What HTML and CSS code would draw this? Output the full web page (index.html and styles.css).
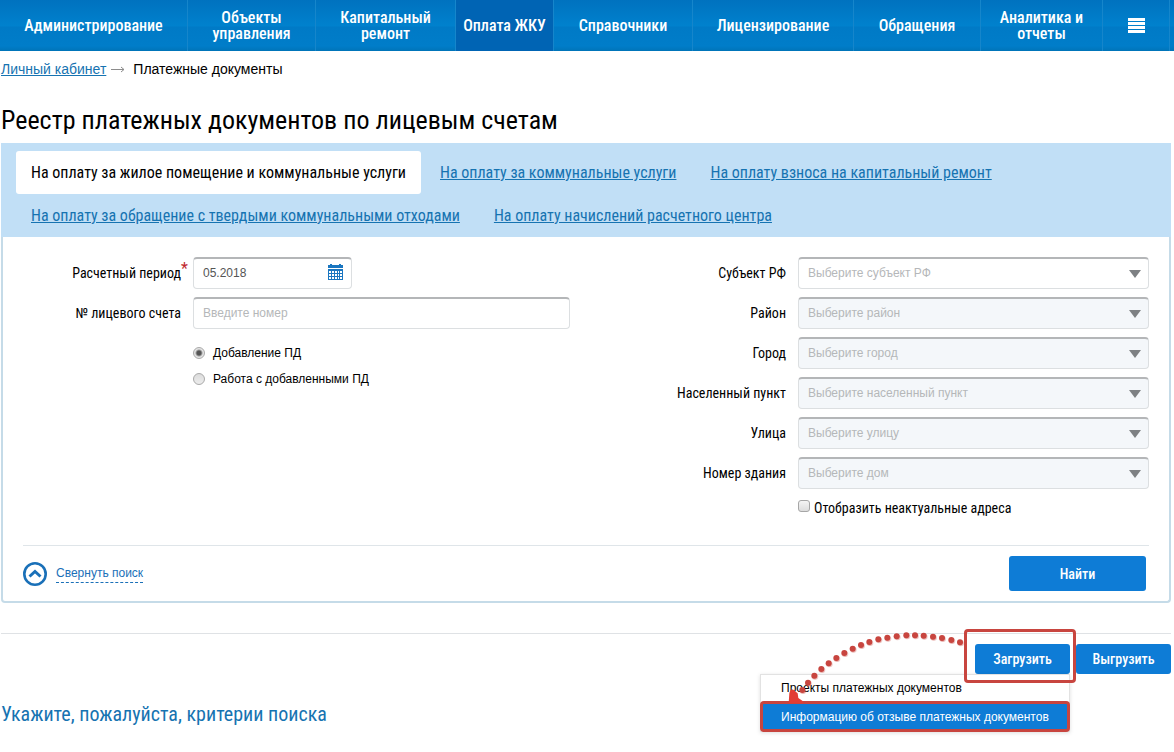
FILE: index.html
```html
<!DOCTYPE html>
<html lang="ru">
<head>
<meta charset="utf-8">
<title>Реестр платежных документов</title>
<link rel="stylesheet" href="styles.css">
</head>
<body>
<nav class="nav">
  <a class="nav-item" href="#">Администрирование</a>
  <a class="nav-item" href="#">Объекты управления</a>
  <a class="nav-item" href="#">Капитальный ремонт</a>
  <a class="nav-item active" href="#">Оплата ЖКУ</a>
  <a class="nav-item" href="#">Справочники</a>
  <a class="nav-item" href="#">Лицензирование</a>
  <a class="nav-item" href="#">Обращения</a>
  <a class="nav-item" href="#">Аналитика и отчеты</a>
  <button class="nav-item nav-menu" type="button" aria-label="Меню">
    <svg width="17" height="16" viewBox="0 0 17 16" fill="#fff"><path d="M0 0h17v3H0zM0 4h17v3H0zM0 8h17v3H0zM0 12h17v3H0z"/></svg>
  </button>
</nav>
<main class="page">
  <div class="crumbs">
    <a class="link" href="#">Личный кабинет</a>
    <svg width="14" height="8" viewBox="0 0 14 8" fill="none" stroke="#8c8c8c"><path d="M0 4.5h13M10 2l3 2.5L10 7"/></svg>
    <span class="crumb-current">Платежные документы</span>
  </div>
  <h1 class="title">Реестр платежных документов по лицевым счетам</h1>

  <form class="panel">
    <div class="tabs">
      <a class="tab current" href="#">На оплату за жилое помещение и коммунальные услуги</a>
      <a class="tab" href="#">На оплату за коммунальные услуги</a>
      <a class="tab" href="#">На оплату взноса на капитальный ремонт</a>
      <a class="tab" href="#">На оплату за обращение с твердыми коммунальными отходами</a>
      <a class="tab" href="#">На оплату начислений расчетного центра</a>
    </div>
    <div class="panel-body">
      <div class="columns">
        <div class="column left">
          <div class="row">
            <label class="label" for="period">Расчетный период<span class="required">*</span></label>
            <div class="date">
              <input class="field" id="period" type="text" value="05.2018">
              <svg class="calendar" width="15" height="16" viewBox="0 0 15 16"><path fill="#1a76c0" d="M0 1h2V0h2v1h7V0h2v1h2v3H0zM0 5h15v11H0z"/><path fill="#fff" d="M1 7h2v2H1zM4 7h2v2H4zM7 7h2v2H7zM10 7h1v2h-1zM12 7h2v2h-2zM1 10h2v2H1zM4 10h2v2H4zM7 10h2v2H7zM10 10h1v2h-1zM12 10h2v2h-2zM1 13h2v2H1zM4 13h2v2H4zM7 13h2v2H7zM10 13h1v2h-1zM12 13h2v2h-2z"/></svg>
            </div>
          </div>
          <div class="row">
            <label class="label" for="account">№ лицевого счета</label>
            <input class="field" id="account" type="text" placeholder="Введите номер">
          </div>
          <div class="radios">
            <label class="radio-row"><input class="radio" type="radio" name="mode" checked>Добавление ПД</label>
            <label class="radio-row"><input class="radio" type="radio" name="mode">Работа с добавленными ПД</label>
          </div>
        </div>
        <div class="column right">
          <div class="row"><label class="label" for="region">Субъект РФ</label><div class="select"><select class="field" id="region"><option>Выберите субъект РФ</option></select></div></div>
          <div class="row"><label class="label" for="district">Район</label><div class="select"><select class="field" id="district" disabled><option>Выберите район</option></select></div></div>
          <div class="row"><label class="label" for="city">Город</label><div class="select"><select class="field" id="city" disabled><option>Выберите город</option></select></div></div>
          <div class="row"><label class="label" for="place">Населенный пункт</label><div class="select"><select class="field" id="place" disabled><option>Выберите населенный пункт</option></select></div></div>
          <div class="row"><label class="label" for="street">Улица</label><div class="select"><select class="field" id="street" disabled><option>Выберите улицу</option></select></div></div>
          <div class="row"><label class="label" for="house">Номер здания</label><div class="select"><select class="field" id="house" disabled><option>Выберите дом</option></select></div></div>
          <label class="check-row"><input class="check" type="checkbox">Отобразить неактуальные адреса</label>
        </div>
      </div>
      <div class="panel-foot">
        <button class="collapse" type="button">
          <svg width="24" height="24" viewBox="0 0 24 24" fill="none" stroke="#1a70b8"><circle cx="12" cy="12" r="10.7" stroke-width="2.6"/><path stroke-width="3" d="M6.500 14.500L12 9.500l5.500 5"/></svg>
          <span class="collapse-text">Свернуть поиск</span>
        </button>
        <button class="button find" type="submit">Найти</button>
      </div>
    </div>
  </form>

  <section class="actions">
    <div class="upload">
      <button class="button" type="button">Загрузить</button>
      <div class="menu">
        <button class="menu-item" type="button">Проекты платежных документов</button>
        <button class="menu-item chosen" type="button">Информацию об отзыве платежных документов</button>
      </div>
      <div class="highlight"></div>
      <svg class="trail" width="180" height="90" viewBox="0 0 540 270" fill="#c8453f">
        <g transform="translate(-135 -255)">
          <g class="dots">
            <circle cx="663" cy="307" r="9"/><circle cx="637" cy="300" r="9"/><circle cx="609" cy="294" r="9"/><circle cx="582" cy="290" r="9"/><circle cx="554" cy="287" r="9"/><circle cx="528" cy="286" r="9"/><circle cx="502" cy="286" r="9"/><circle cx="473" cy="289" r="9"/><circle cx="445" cy="293" r="9"/><circle cx="418" cy="298" r="9"/><circle cx="391" cy="306" r="9"/><circle cx="366" cy="315" r="9"/><circle cx="341" cy="326" r="9"/><circle cx="316" cy="339" r="9"/><circle cx="292" cy="354" r="9"/><circle cx="269" cy="370" r="9"/><circle cx="247" cy="387" r="9"/><circle cx="226" cy="407" r="9"/><circle cx="207" cy="428" r="9"/><circle cx="190" cy="450" r="9"/>
          </g>
          <path fill="#e23d35" d="M149 490L151 460Q154 446 163 449L176 460L178 474L192 484V490Z"/>
        </g>
      </svg>
    </div>
    <button class="button" type="button">Выгрузить</button>
  </section>
  <p class="hint">Укажите, пожалуйста, критерии поиска</p>
</main>
</body>
</html>
```
FILE: styles.css
```css
* { box-sizing: border-box; }
body {
  min-height: 100vh;
  margin: 0;
  background: #fff;
  color: #000;
  font-family: "Roboto Condensed", "Liberation Sans Narrow", Roboto, sans-serif;
  font-size: 14px;
}
button { font-family: inherit; border: 0; cursor: pointer; }

.nav {
  display: grid;
  grid-template-columns: 188fr 128fr 140fr 98fr 139fr 161fr 127fr 122fr 67fr;
  padding-right: 4px;
  height: 51px;
  background: linear-gradient(#0072bf, #0081cd 50%, #007ac6 54%, #007dc9 90%, #0074b8);
}
.nav-item {
  display: flex;
  align-items: center;
  justify-content: center;
  padding: 0 8px;
  border-right: 1px solid #1686cb;
  background: none;
  color: #fff;
  font-size: 16px;
  font-weight: 500;
  line-height: 16px;
  text-align: center;
  text-decoration: none;
}
.nav-item.active { padding: 0; background: #0064b4; }

.page { padding: 0 3px 24px 1px; }
.link { color: #1673b1; }
.crumbs {
  display: flex;
  align-items: center;
  gap: 5px;
  padding-top: 9px;
  font-family: "Liberation Sans", Arial, sans-serif;
  font-size: 14px;
  line-height: 18px;
}
.crumb-current { padding-left: 3px; }
.title {
  margin: 26px 0 7px;
  font-size: 26px;
  font-weight: 400;
  line-height: 32px;
}

.panel {
  border: 2px solid #c5dbe8;
  border-top: 0;
  border-radius: 0 0 4px 4px;
}
.tabs {
  display: flex;
  flex-wrap: wrap;
  column-gap: 4px;
  margin: 0 -2px;
  padding: 8px 15px 0;
  background: #c1dff6;
}
.tab {
  padding: 0 15px;
  color: #1673b1;
  font-size: 16px;
  line-height: 43px;
}
.tab.current {
  border-radius: 3px;
  background: #fff;
  color: #000;
  text-decoration: none;
}
.panel-body { padding: 20px 20px 10px; }
.columns { display: grid; grid-template-columns: 547fr 579fr; }
.column { display: flex; flex-direction: column; gap: 8px; }
.row { display: flex; align-items: center; gap: 12px; height: 32px; }
.label { position: relative; flex: none; font-size: 14px; line-height: 20px; text-align: right; }
.left .label { width: 158px; }
.right .label { width: 216px; }
.required { position: absolute; left: 100%; top: -4px; color: #c0282d; font-size: 16px; }
.field {
  width: 100%;
  min-width: 0;
  height: 32px;
  margin: 0;
  padding: 0 9px 1px;
  border: 1px solid #dcdfe1;
  border-top: 2px solid #b4b6b8;
  border-radius: 4px;
  background: #fff;
  color: #555;
  font-family: "Liberation Sans", Arial, sans-serif;
  font-size: 12px;
  appearance: none;
}
.field::placeholder { color: #b5b7b9; opacity: 1; }
.date { position: relative; width: 159px; }
.calendar { position: absolute; right: 9px; top: 7px; }
.select { position: relative; flex: 1; }
.select .field { color: #b5b7b9; opacity: 1; }
.select .field:disabled { background: #f4f7fa; }
.select::after {
  content: "";
  position: absolute;
  right: 8px;
  top: 13px;
  border: 6px solid transparent;
  border-top: 8px solid #7d8083;
  border-bottom: 0;
}
.radios {
  display: flex;
  flex-direction: column;
  gap: 10px;
  padding: 8px 0 0 170px;
  font-family: "Liberation Sans", Arial, sans-serif;
  font-size: 12px;
  line-height: 16px;
}
.radio-row { display: flex; align-items: center; gap: 8px; }
.radio {
  width: 12px;
  height: 12px;
  margin: 0;
  border: 1px solid #a9a9a9;
  border-radius: 50%;
  background: linear-gradient(#dcdcdc, #ececec);
  appearance: none;
}
.radio:checked { background: radial-gradient(circle, #555 0 2px, #e4e4e4 4px); }
.check-row {
  display: flex;
  align-items: center;
  gap: 4px;
  padding: 0 0 0 228px;
  font-size: 14px;
  line-height: 22px;
}
.check {
  width: 12px;
  height: 12px;
  margin: 0 0 4px;
  border: 1px solid #a6a6a6;
  border-radius: 3px;
  background: linear-gradient(#f4f4f4, #dcdcdc);
  appearance: none;
}
.panel-foot {
  display: flex;
  align-items: center;
  justify-content: space-between;
  margin-top: 26px;
  padding: 10px 3px 0 0;
  border-top: 1px solid #dfe5e9;
}
.collapse {
  display: flex;
  align-items: center;
  gap: 9px;
  padding: 0;
  background: none;
  color: #1a70b8;
  font-family: "Liberation Sans", Arial, sans-serif;
  font-size: 12px;
}
.collapse-text { border-bottom: 1px dashed #1a70b8; line-height: 17px; }
.button {
  width: 95px;
  height: 30px;
  padding: 0;
  border-radius: 3px;
  background: #0e7cd6;
  color: #fff;
  font-size: 14px;
  font-weight: 500;
}
.button.find { width: 137px; height: 35px; }

.actions {
  display: flex;
  justify-content: flex-end;
  gap: 6px;
  margin-top: 30px;
  padding-top: 10px;
  border-top: 1px solid #dfe2e5;
}
.upload { position: relative; z-index: 1; }
.menu {
  position: absolute;
  top: 100%;
  right: 0;
  width: 310px;
  border: 1px solid #e2e2e2;
  background: #fff;
  box-shadow: 0 1px 4px #0002;
}
.menu-item {
  display: block;
  width: 100%;
  height: 26px;
  padding: 0 20px;
  background: #fff;
  font-family: "Liberation Sans", Arial, sans-serif;
  font-size: 12px;
  text-align: left;
  white-space: nowrap;
}
.menu-item.chosen {
  width: 310px;
  height: 31px;
  margin: 0 -1px -1px;
  padding: 0 18px;
  border: 3px solid #c8453f;
  border-radius: 4px;
  background: #0e7cd6;
  color: #fff;
}
.highlight {
  position: absolute;
  inset: -15px -6px -9px -11px;
  border: 3px solid #c8453f;
  border-radius: 4px;
  pointer-events: none;
}
.trail { position: absolute; right: 106px; top: -19px; pointer-events: none; }
.dots { filter: drop-shadow(2px 3px 2px #c8453f66); }
.hint {
  margin: 28px 0 0;
  color: #1673b1;
  font-size: 20px;
  font-weight: 400;
  line-height: 24px;
}
```
